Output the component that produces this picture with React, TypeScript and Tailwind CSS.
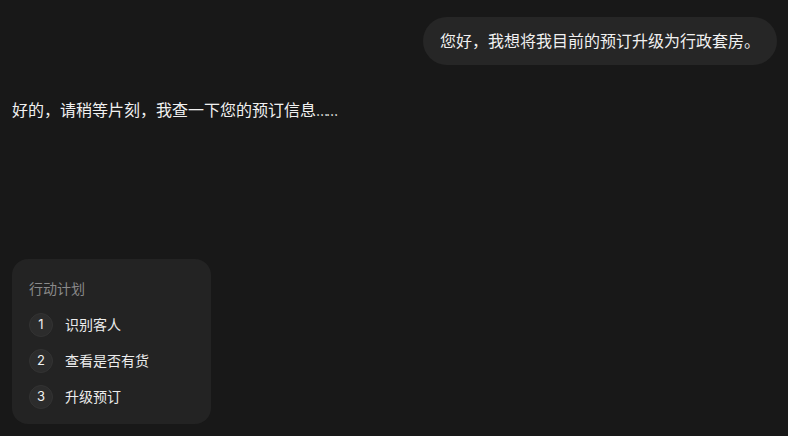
import React from 'react';

const steps = ['识别客人', '查看是否有货', '升级预订'];

const App: React.FC = () => {
    return (
        <div
            className="w-[788px] h-[436px] bg-[#181818] text-[#ececec] flex flex-col overflow-hidden"
            style={{ fontFamily: '"Inter", "Noto Sans CJK SC", sans-serif' }}
        >
            {/* 用户消息 */}
            <div className="flex justify-end pt-[17px] pr-[11px]">
                <div className="bg-[#262626] rounded-[24px] px-[17px] py-[13px] text-[16px] leading-[22px] text-[#f0f0f0]">
                    您好，我想将我目前的预订升级为行政套房。
                </div>
            </div>

            {/* 助手回复 */}
            <div className="pl-[12px] mt-[34px] text-[16px] leading-[22px] text-[#f0f0f0]">
                好的，请稍等片刻，我查一下您的预订信息
                <span className="tracking-[-2px] text-[14px]">……</span>
            </div>

            {/* 行动计划 */}
            <div className="mt-auto mb-[12px] ml-[12px] w-[199px] bg-[#232323] rounded-[16px] pt-[20px] pb-[15px] px-[17px]">
                <div className="text-[14px] leading-[20px] text-[#8a8a8a] mb-[14px]">行动计划</div>
                <div className="flex flex-col gap-[12px]">
                    {steps.map((s, i) => (
                        <div key={s} className="flex items-center gap-[12px]">
                            <div className="w-[24px] h-[24px] rounded-full bg-[#2c2c2c] border border-[#333] flex items-center justify-center text-[13px] text-[#f0f0f0]">
                                {i + 1}
                            </div>
                            <span className="text-[14px] leading-[20px] text-[#ececec]">{s}</span>
                        </div>
                    ))}
                </div>
            </div>
        </div>
    );
};

export default App;
